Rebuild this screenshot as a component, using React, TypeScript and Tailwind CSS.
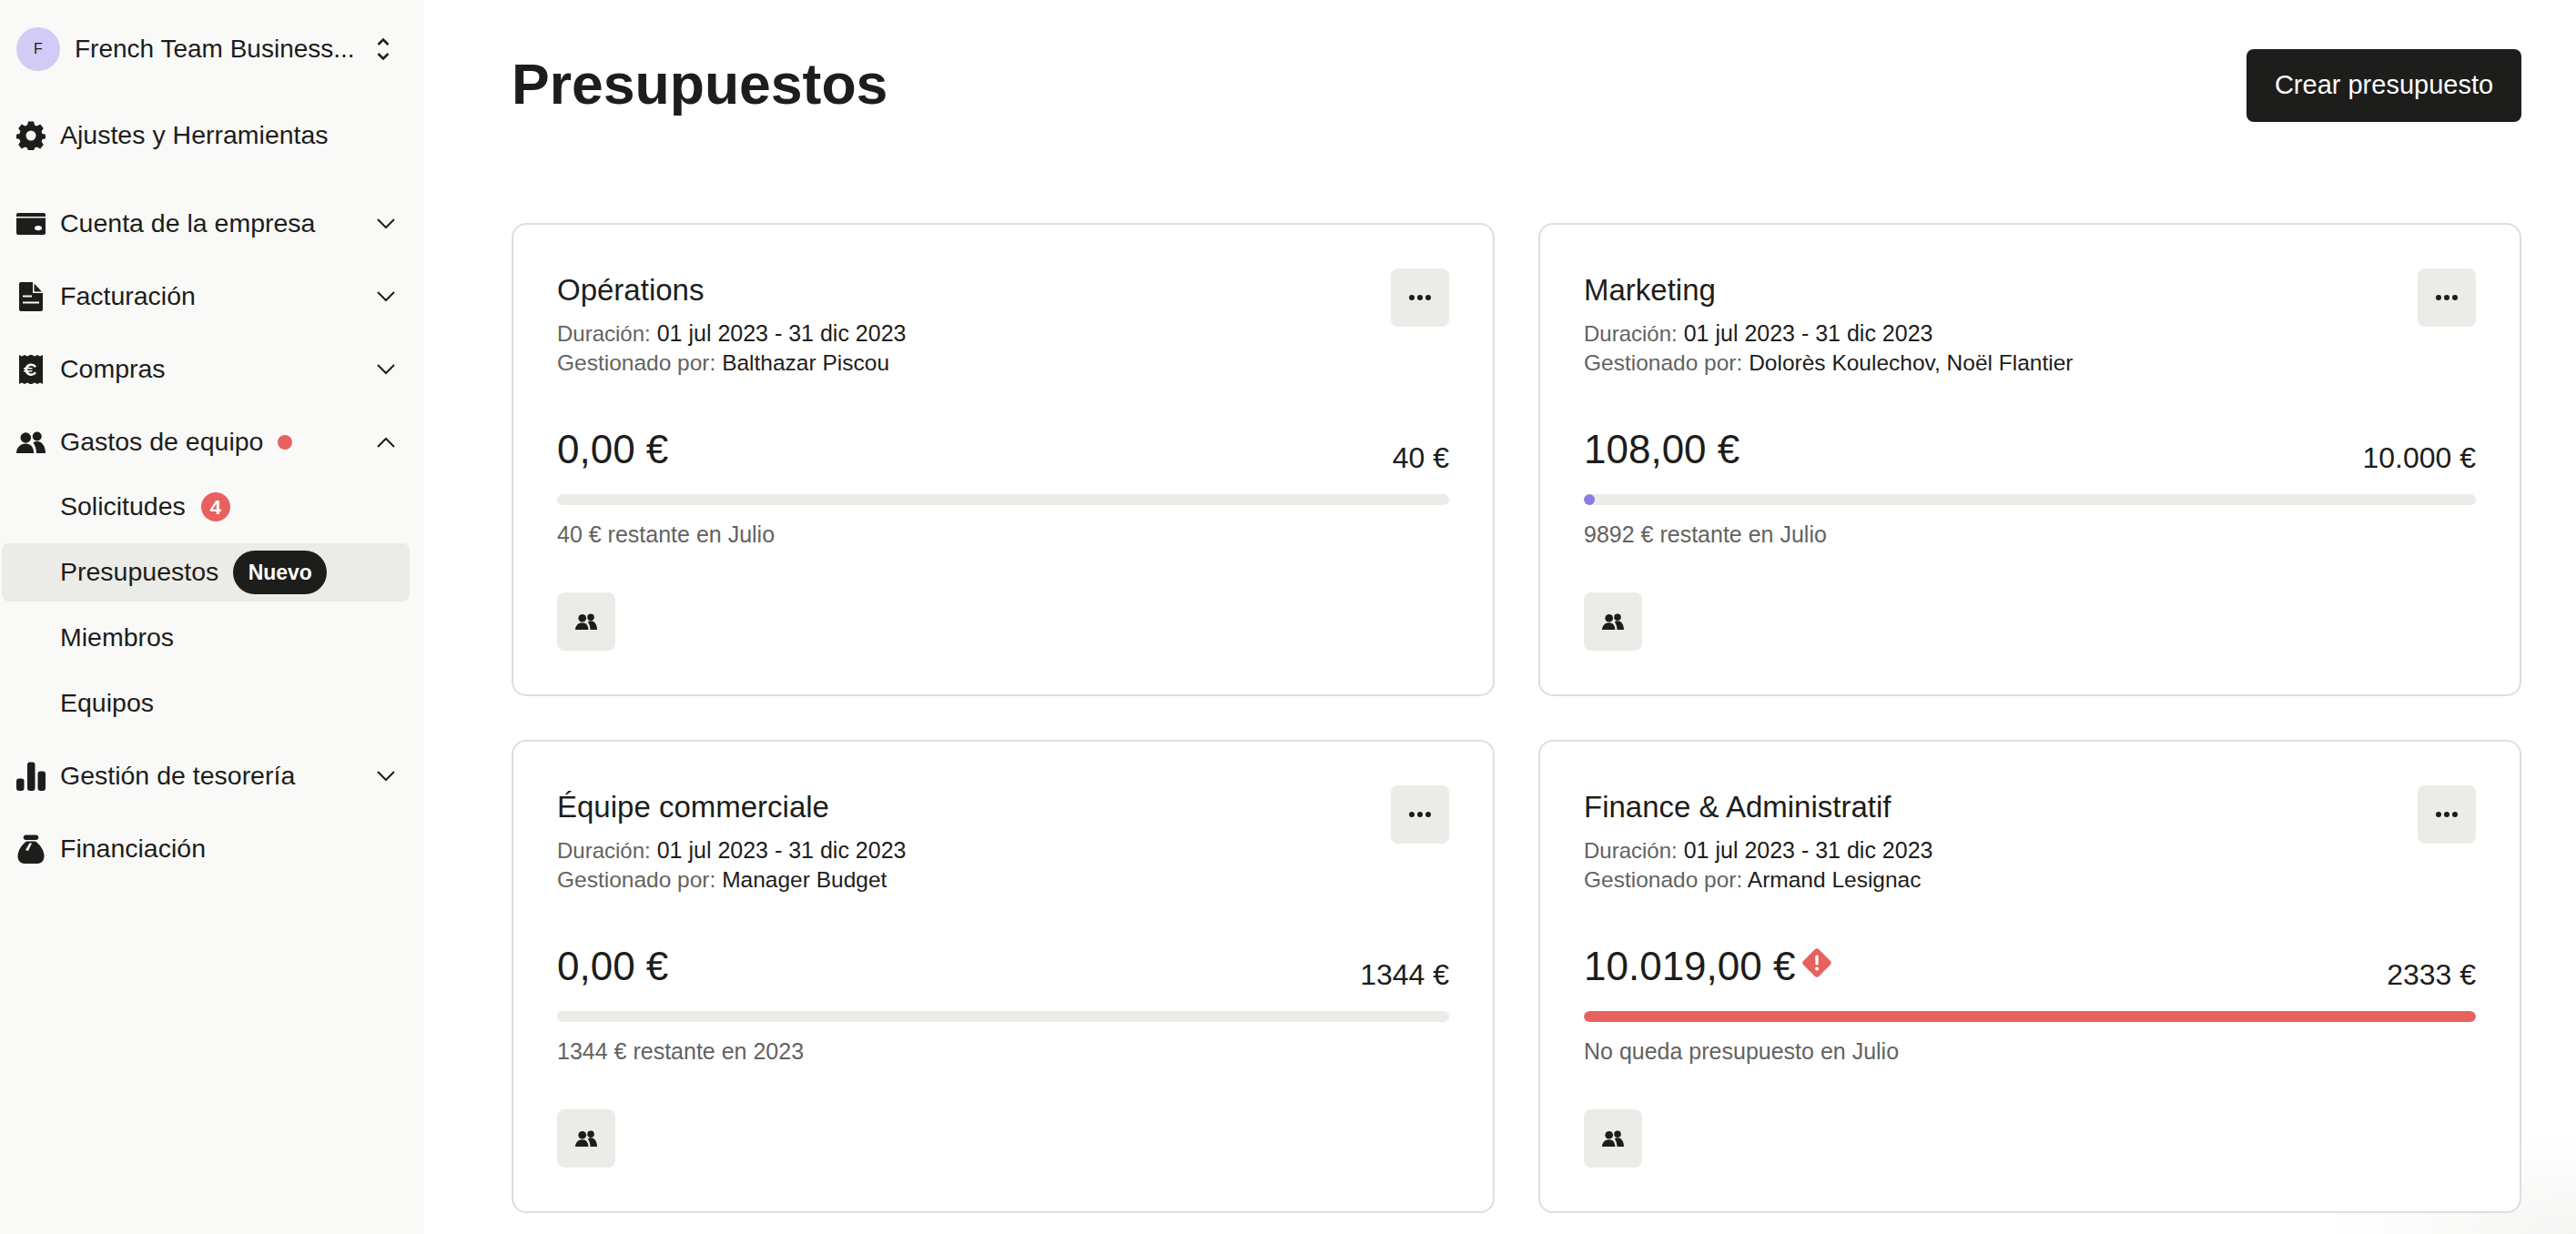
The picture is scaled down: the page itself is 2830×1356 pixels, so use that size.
import React from "react";

const font = { fontFamily: "'Liberation Sans', Arial, sans-serif" };

function Gear() {
  return (
    <svg viewBox="0 0 32 32" className="w-8 h-8 shrink-0" fill="#1d1d1b">
      <path fillRule="evenodd" d="M13 0.500h6l1 4 2.600 1.100 3.600-2.100 3.600 4.400-2.200 3.400.9 2.600 4 1v4.200l-4 1-.9 2.600 2.200 3.400-3.600 4.400-3.600-2.100-2.600 1.100-1 4h-6l-1-4-2.600-1.100-3.600 2.100-3.600-4.400 2.200-3.400-.9-2.600-4-1v-4.200l4-1 .9-2.600-2.200-3.400 3.600-4.400 3.600 2.100L12 4.500zM16 10.500a5.500 5.500 0 1 0 0 11 5.500 5.500 0 0 0 0-11z" />
    </svg>
  );
}
function CardIcon() {
  return (
    <svg viewBox="0 0 32 32" className="w-8 h-8 shrink-0" fill="#1d1d1b">
      <path fillRule="evenodd" d="M2 4h28a2 2 0 0 1 2 2v2H0V6a2 2 0 0 1 2-2zM0 9.500h32V26a2 2 0 0 1-2 2H2a2 2 0 0 1-2-2zM24 18a4 2.600 0 0 0 0 5.200a4 2.600 0 0 0 0-5.200z" />
    </svg>
  );
}
function DocIcon() {
  return (
    <svg viewBox="0 0 32 32" className="w-8 h-8 shrink-0" fill="#1d1d1b">
      <path fillRule="evenodd" d="M5 0h13v12h11v18a2 2 0 0 1-2 2H5a2 2 0 0 1-2-2V2a2 2 0 0 1 2-2zM7 14.500v2h10v-2zM7 21.500v2h18v-2z" />
      <path d="M19.500 1.500l8.500 9h-8.500z" />
    </svg>
  );
}
function ReceiptIcon() {
  return (
    <svg viewBox="0 0 32 32" className="w-8 h-8 shrink-0" fill="#1d1d1b">
      <path fillRule="evenodd" d="M3 0l3 1.500L9 0l3 1.500L15 0h2l3 1.500L23 0l3 1.500L29 0v32l-3-1.500L23 32l-3-1.500L17 32h-2l-3-1.500L9 32l-3-1.500L3 32zM22 12.500A7 7 0 0 0 9.700 14H8v1.500h1.300v1.500H8v1.500h1.700A7 7 0 0 0 22 20l-2-1.500a4 4 0 0 1-7-.1h4.500V17h-5.300v-1.500h5.300V14H13a4 4 0 0 1 7-.1z" />
    </svg>
  );
}
function Team({ className = "w-8 h-8" }: { className?: string }) {
  return (
    <svg viewBox="0 0 32 32" className={className + " shrink-0"} fill="#1d1d1b">
      <circle cx="10.300" cy="11" r="5.800" />
      <circle cx="22.700" cy="9.500" r="5" />
      <path d="M0 28c0-6 4.500-10.500 10-10.500 3 0 5.500 1 7 3 1.300 2 2.200 4.800 2.200 7.500z" />
      <path d="M18.500 16.500c1-1 2.500-1.500 4.500-1.500 5.500 0 9 6 9 13H22c0-4.500-1.300-8.500-3.500-11.500z" />
    </svg>
  );
}
function BarsIcon() {
  return (
    <svg viewBox="0 0 32 32" className="w-8 h-8 shrink-0" fill="#1d1d1b">
      <rect x="0" y="18.500" width="8.500" height="13.500" rx="3" />
      <rect x="12" y="0.500" width="8.500" height="31.500" rx="3" />
      <rect x="23.500" y="10.500" width="8.500" height="21.500" rx="3" />
    </svg>
  );
}
function BagIcon() {
  return (
    <svg viewBox="0 0 32 32" className="w-8 h-8 shrink-0" fill="#1d1d1b">
      <path d="M10.500 0.500h11a2.500 2.500 0 0 1 0 5.500h-11a2.500 2.500 0 0 1 0-5.500z" />
      <path fillRule="evenodd" d="M11 7.500h10c5 3.500 9.500 10 9.500 16.500 0 5-3.500 8-7.500 8H9c-4 0-7.500-3-7.500-8 0-6.500 4.500-13 9.500-16.500zM14.500 9.500L10 17l3 1 4-8.500z" />
    </svg>
  );
}
function Chevron({ up = false }: { up?: boolean }) {
  return (
    <svg viewBox="0 0 20 12" className="w-5 h-3 shrink-0" fill="none" stroke="#1d1d1b" strokeWidth="2">
      <path d={up ? "M1 11L10 2l9 9" : "M1 1l9 9 9-9"} />
    </svg>
  );
}
function Dots() {
  return (
    <svg viewBox="0 0 24 6" className="w-6 h-[6px]" fill="#1d1d1b">
      <circle cx="3" cy="3" r="3" />
      <circle cx="12" cy="3" r="3" />
      <circle cx="21" cy="3" r="3" />
    </svg>
  );
}
function Warn() {
  return (
    <svg viewBox="0 0 32 32" className="w-8 h-8 shrink-0">
      <path d="M13.500 1.500a3.500 3.500 0 0 1 5 0l12 12a3.500 3.500 0 0 1 0 5l-12 12a3.500 3.500 0 0 1-5 0l-12-12a3.500 3.500 0 0 1 0-5z" fill="#e8615e" />
      <rect x="14.300" y="7.500" width="3.400" height="11" rx="1.700" fill="#fff" />
      <circle cx="16" cy="22.500" r="2" fill="#fff" />
    </svg>
  );
}

function NavItem({ icon, label, chevron, up, children, className = "" }: { icon: React.ReactNode; label: string; chevron?: boolean; up?: boolean; children?: React.ReactNode; className?: string }) {
  return (
    <div className={"flex h-10 items-center pl-[18px] pr-[32px] " + className}>
      {icon}
      <span className="ml-4 -mt-[2px] text-[28.5px] leading-10 text-[#1d1d1b] whitespace-nowrap">{label}</span>
      {children}
      {chevron && <span className="ml-auto"><Chevron up={up} /></span>}
    </div>
  );
}

function SubItem({ label, children, active }: { label: string; children?: React.ReactNode; active?: boolean }) {
  return (
    <div className={"flex h-16 items-center ml-[2px] w-[448px] rounded-lg pl-[64px] " + (active ? "bg-[#ebebe7]" : "")}>
      <span className="-mt-[2px] text-[28.5px] leading-10 text-[#1d1d1b]">{label}</span>
      {children}
    </div>
  );
}

type CardProps = { title: string; managers: string; spent: string; total: string; note: string; warn?: boolean; barClass?: string };

function Card({ title, managers, spent, total, note, warn, barClass }: CardProps) {
  return (
    <div className="h-[520px] rounded-2xl border-2 border-[#dededa] bg-white p-12 flex flex-col">
      <div className="flex justify-between items-start h-[124px]">
        <div>
          <div className="text-[33px] leading-10 text-[#1d1d1b] mt-1">{title}</div>
          <div className="text-[25px] leading-8 text-[#1d1d1b] mt-[11px]"><span className="text-[24px] text-[#636360]">Duración:</span> 01 jul 2023 - 31 dic 2023</div>
          <div className="text-[24.5px] leading-8 text-[#1d1d1b]"><span className="text-[#636360]">Gestionado por:</span> {managers}</div>
        </div>
        <div className="w-16 h-16 rounded-lg bg-[#ebebe7] flex items-center justify-center"><Dots /></div>
      </div>
      <div className="flex justify-between items-end mt-[45px] h-[60px]">
        <div className="flex items-center gap-2">
          <span className="text-[44px] leading-[60px] text-[#1d1d1b]">{spent}</span>
          {warn && <span className="-mt-2"><Warn /></span>}
        </div>
        <span className="text-[32px] leading-10 text-[#1d1d1b] mb-[1px]">{total}</span>
      </div>
      <div className="h-3 rounded-md bg-[#ebebe7] mt-[19px] overflow-hidden flex">
        {barClass && <div className={barClass} />}
      </div>
      <div className="text-[25px] leading-8 text-[#636360] mt-4">{note}</div>
      <div className="w-16 h-16 rounded-lg bg-[#ebebe7] flex items-center justify-center mt-12"><Team className="w-6 h-6" /></div>
    </div>
  );
}

export default function App() {
  return (
    <div className="flex h-screen overflow-hidden bg-white" style={font}>
      <aside className="w-[466px] shrink-0 bg-[#f9f9f7] pt-[30px] flex flex-col">
        <div className="flex items-center h-12 pl-[18px] pr-[38px]">
          <div className="w-12 h-12 rounded-full bg-[#d2cbf5] flex items-center justify-center text-[16px] font-medium text-[#1d1d1b]">F</div>
          <span className="ml-4 text-[28px] leading-10 text-[#1d1d1b] whitespace-nowrap">French Team Business...</span>
          <svg viewBox="0 0 14 26" className="ml-auto w-[14px] h-[26px]" fill="none" stroke="#1d1d1b" strokeWidth="2.500"><path d="M1.500 8L7 2.500 12.500 8M1.500 18L7 23.500 12.500 18" /></svg>
        </div>
        <NavItem icon={<Gear />} label="Ajustes y Herramientas" className="mt-[51px]" />
        <NavItem icon={<CardIcon />} label="Cuenta de la empresa" chevron className="mt-[57px]" />
        <NavItem icon={<DocIcon />} label="Facturación" chevron className="mt-10" />
        <NavItem icon={<ReceiptIcon />} label="Compras" chevron className="mt-10" />
        <NavItem icon={<Team />} label="Gastos de equipo" chevron up className="mt-10">
          <span className="ml-4 w-4 h-4 rounded-full bg-[#e8615e]" />
        </NavItem>
        <div className="mt-[19px] flex flex-col gap-2">
          <SubItem label="Solicitudes">
            <span className="ml-[17px] w-8 h-8 rounded-full bg-[#e8615e] text-white text-[22px] font-bold flex items-center justify-center">4</span>
          </SubItem>
          <SubItem label="Presupuestos" active>
            <span className="ml-4 h-12 w-[103px] rounded-full bg-[#1d1d1b] text-white text-[23px] font-bold flex items-center justify-center">Nuevo</span>
          </SubItem>
          <SubItem label="Miembros" />
          <SubItem label="Equipos" />
        </div>
        <NavItem icon={<BarsIcon />} label="Gestión de tesorería" chevron className="mt-[28px]" />
        <NavItem icon={<BagIcon />} label="Financiación" className="mt-10" />
      </aside>
      <main className="flex-1 pl-24 pr-[60px] pt-[54px] bg-[radial-gradient(ellipse_280px_110px_at_100%_100%,#f5f5f3,#ffffff)]">
        <div className="flex justify-between items-center h-20">
          <h1 className="text-[62.5px] leading-[76px] font-bold text-[#1d1d1b] -mt-1">Presupuestos</h1>
          <button className="w-[302px] h-20 rounded-lg bg-[#1d1d1b] text-white text-[29px]">Crear presupuesto</button>
        </div>
        <div className="grid grid-cols-2 gap-x-12 gap-y-[48px] mt-[111px]">
          <Card title="Opérations" managers="Balthazar Piscou" spent="0,00 €" total="40 €" note="40 € restante en Julio" />
          <Card title="Marketing" managers="Dolorès Koulechov, Noël Flantier" spent="108,00 €" total="10.000 €" note="9892 € restante en Julio" barClass="w-3 h-3 rounded-full bg-[#8b7bea]" />
          <Card title="Équipe commerciale" managers="Manager Budget" spent="0,00 €" total="1344 €" note="1344 € restante en 2023" />
          <Card title="Finance & Administratif" managers="Armand Lesignac" spent="10.019,00 €" total="2333 €" note="No queda presupuesto en Julio" warn barClass="w-full h-3 rounded-md bg-[#e8615e]" />
        </div>
      </main>
    </div>
  );
}
